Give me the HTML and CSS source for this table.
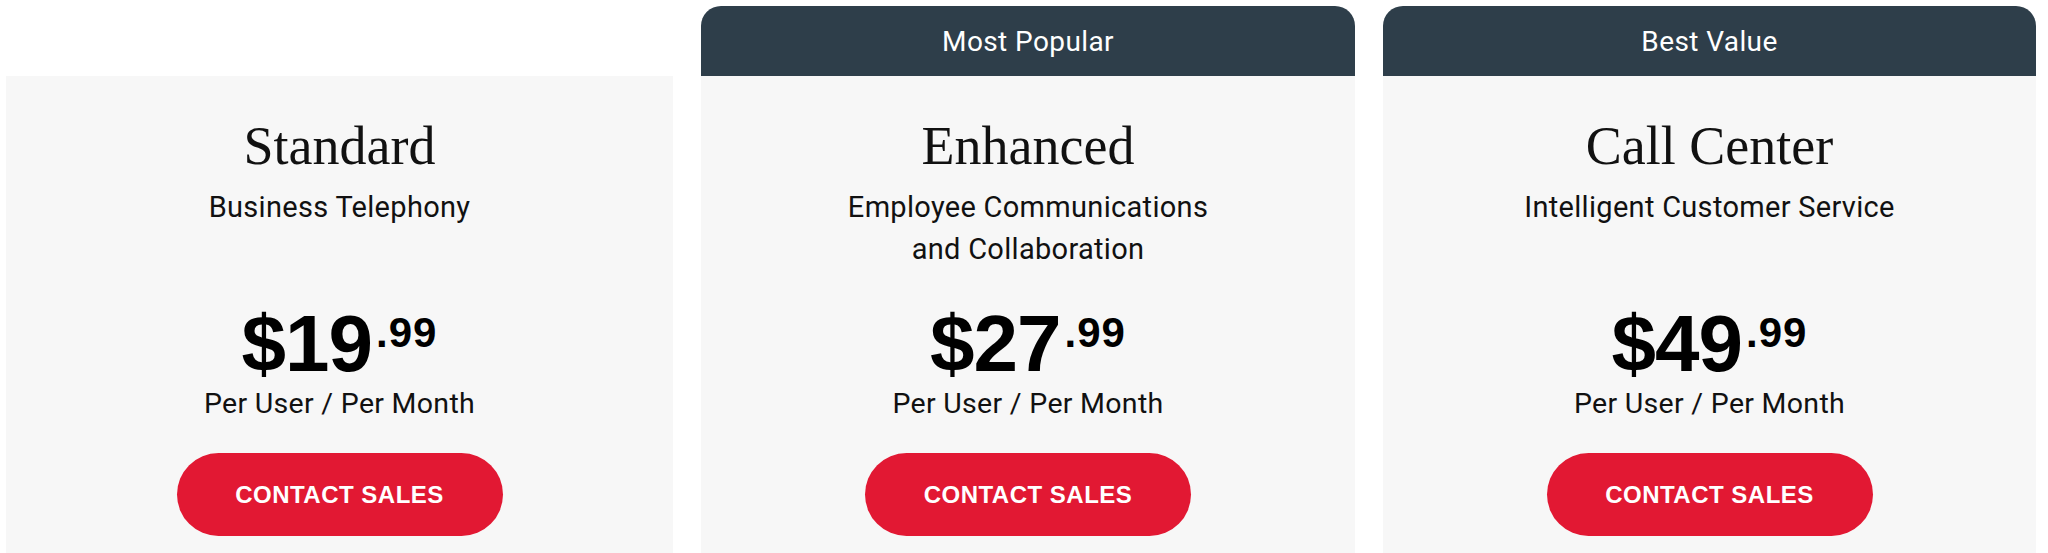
FILE: index.html
```html
<!DOCTYPE html>
<html lang="en">
<head>
<meta charset="utf-8">
<title>Pricing</title>
<link rel="stylesheet" href="styles.css">
</head>
<body>
<main class="plans">
  <section class="plan plan-standard">
    <div class="plan-body">
      <div class="plan-head">
        <h2 class="plan-title">Standard</h2>
        <p class="plan-sub">Business Telephony</p>
      </div>
      <div class="price"><span class="price-main">$19</span><span class="price-cents">.99</span></div>
      <p class="price-unit">Per User / Per Month</p>
      <a class="cta" href="#">CONTACT SALES</a>
    </div>
  </section>
  <section class="plan">
    <div class="badge">Most Popular</div>
    <div class="plan-body">
      <div class="plan-head">
        <h2 class="plan-title">Enhanced</h2>
        <p class="plan-sub">Employee Communications<br>and Collaboration</p>
      </div>
      <div class="price"><span class="price-main">$27</span><span class="price-cents">.99</span></div>
      <p class="price-unit">Per User / Per Month</p>
      <a class="cta" href="#">CONTACT SALES</a>
    </div>
  </section>
  <section class="plan">
    <div class="badge">Best Value</div>
    <div class="plan-body">
      <div class="plan-head">
        <h2 class="plan-title">Call Center</h2>
        <p class="plan-sub">Intelligent Customer Service</p>
      </div>
      <div class="price"><span class="price-main">$49</span><span class="price-cents">.99</span></div>
      <p class="price-unit">Per User / Per Month</p>
      <a class="cta" href="#">CONTACT SALES</a>
    </div>
  </section>
</main>
</body>
</html>
```
FILE: styles.css
```css
html, body {
  margin: 0;
  padding: 0;
  background: #ffffff;
  overflow: hidden;
}

body {
  font-family: Roboto, "Liberation Sans", sans-serif;
  color: #111111;
}

.plans {
  display: grid;
  grid-template-columns: 667px 654px 653px;
  column-gap: 28px;
  padding: 6px 0 0 6px;
  align-items: end;
}

.plan {
  display: flex;
  flex-direction: column;
}

.badge {
  height: 70px;
  display: flex;
  align-items: center;
  justify-content: center;
  background: #2e3e4a;
  color: #ffffff;
  border-radius: 20px 20px 0 0;
  font-size: 28px;
  letter-spacing: 0.4px;
}

.plan-body {
  background: #f7f7f7;
  display: flex;
  flex-direction: column;
  align-items: center;
  padding: 38px 0 30px;
  text-align: center;
}

.plan-head {
  height: 156px;
  display: flex;
  flex-direction: column;
  align-items: center;
}

.plan-title {
  margin: 0;
  font-family: "Liberation Serif", "Times New Roman", serif;
  font-weight: 400;
  font-size: 54px;
  line-height: 64px;
  color: #111111;
}

.plan-sub {
  margin: 8px 0 0;
  font-size: 29px;
  line-height: 42px;
  letter-spacing: 0.3px;
}

.price {
  margin-top: 34px;
  height: 80px;
  line-height: 80px;
  font-family: "Liberation Sans", Arial, sans-serif;
  font-weight: 700;
  color: #000000;
  white-space: nowrap;
}

.price-main {
  font-size: 80px;
  letter-spacing: -1px;
}

.price-cents {
  font-size: 42px;
  line-height: 42px;
  vertical-align: 24px;
  margin-left: 4px;
  letter-spacing: 1px;
}

.price-unit {
  margin: 2px 0 0;
  font-size: 28.5px;
  line-height: 36px;
  letter-spacing: 0.3px;
}

.cta {
  margin-top: 31px;
  width: 326px;
  height: 83px;
  border-radius: 42px;
  background: #e21833;
  color: #ffffff;
  display: flex;
  align-items: center;
  justify-content: center;
  font-family: "Liberation Sans", Arial, sans-serif;
  font-weight: 700;
  font-size: 24px;
  letter-spacing: 0.5px;
  text-decoration: none;
}
```
